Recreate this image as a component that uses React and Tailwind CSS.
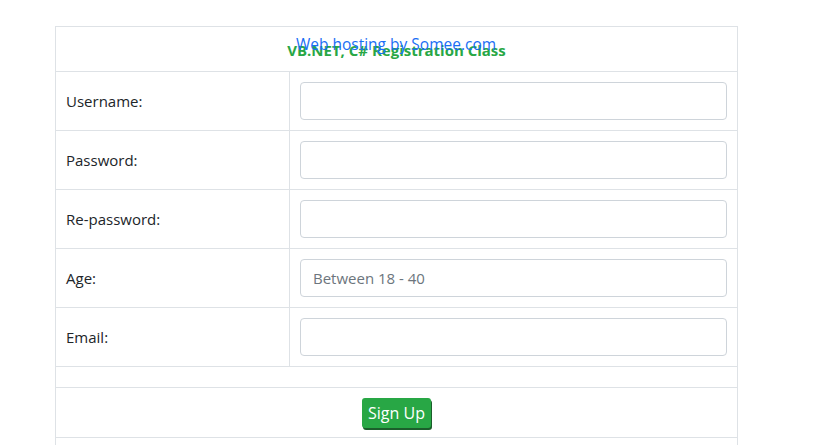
import React from 'react'

const FIELDS = [
  { label: 'Username:', type: 'text' },
  { label: 'Password:', type: 'password' },
  { label: 'Re-password:', type: 'password' },
  { label: 'Age:', type: 'text', placeholder: 'Between 18 - 40' },
  { label: 'Email:', type: 'email' },
]

export default function App() {
  return (
    <div className="relative min-h-[445px] bg-white text-[#212529]" style={{ fontFamily: '"Open Sans", "Noto Sans", sans-serif' }}>
      {/* hosting banner overlay */}
      <div className="absolute left-0 top-[35px] w-[792px] text-center text-[15.5px] leading-[18px] text-[#1a6ef5] z-10">
        Web hosting by Somee.com
      </div>

      <div className="pt-[26px] pl-[55px]">
        <table className="w-[683px] border-collapse text-[15px]">
          <tbody>
            <tr>
              <td colSpan={2} className="h-[45px] border border-[#dee2e6] text-center align-middle pt-[3px]">
                <span className="font-bold text-[15px] text-[#28a745]">VB.NET, C# Registration Class</span>
              </td>
            </tr>
            {FIELDS.map((f) => (
              <tr key={f.label}>
                <td className="h-[59px] w-[234px] border border-[#dee2e6] px-[10px] align-middle">{f.label}</td>
                <td className="h-[59px] border border-[#dee2e6] px-[10px] align-middle">
                  <input
                    type={f.type}
                    placeholder={f.placeholder}
                    className="block w-full h-[38px] rounded-[4px] border border-[#ced4da] px-[12px] text-[15px] text-[#495057] placeholder:text-[#6c757d] outline-none"
                  />
                </td>
              </tr>
            ))}
            <tr>
              <td colSpan={2} className="h-[21px] border border-[#dee2e6]"></td>
            </tr>
            <tr>
              <td colSpan={2} className="h-[50px] border border-[#dee2e6] text-center align-middle">
                <button className="h-[30px] px-[6px] rounded-[3px] bg-[#28a745] text-white text-[16px] leading-none shadow-[1px_2px_0_#1b5e2b]">
                  Sign Up
                </button>
              </td>
            </tr>
            <tr>
              <td colSpan={2} className="h-[8px] border-x border-t border-[#dee2e6]"></td>
            </tr>
          </tbody>
        </table>
      </div>
    </div>
  )
}
